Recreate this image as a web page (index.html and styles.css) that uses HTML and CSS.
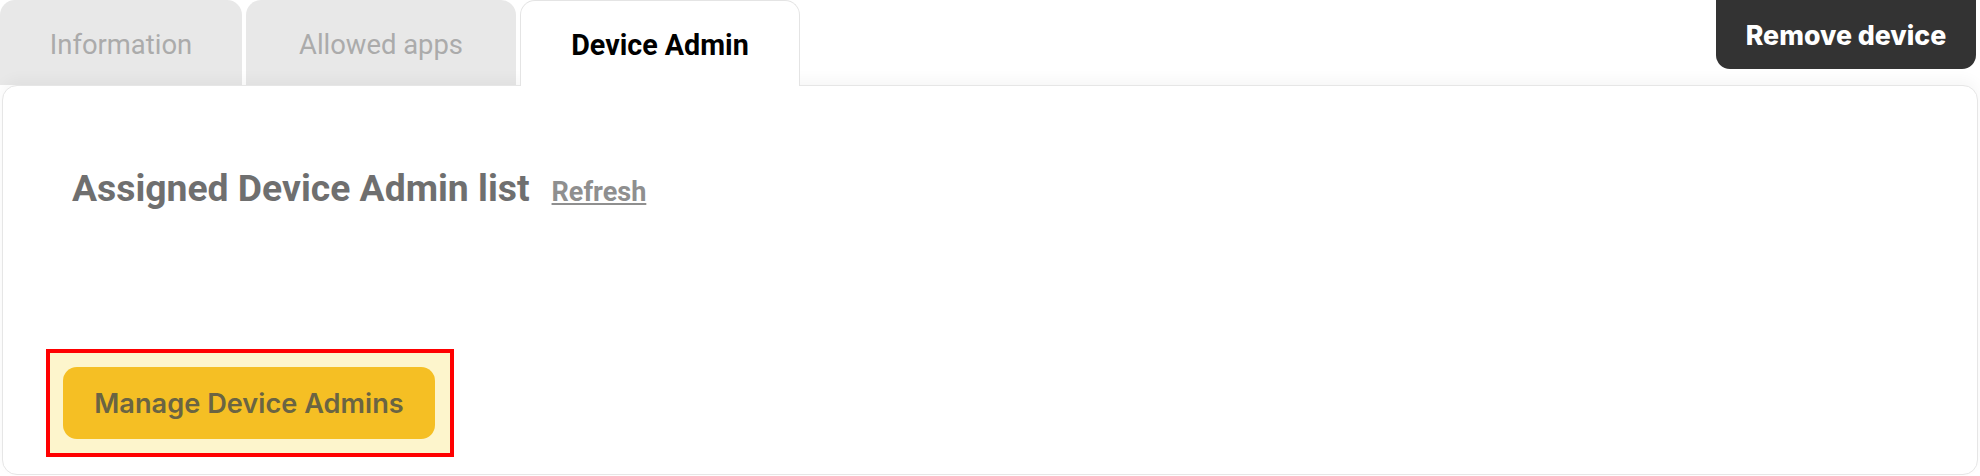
FILE: index.html
```html
<!DOCTYPE html>
<html>
<head>
  <title>Device Admin</title>
  <link rel="stylesheet" href="styles.css">
</head>
<body>
  <div class="page">
    <div class="top-bar">
      <div class="tabs">
        <div class="tab tab-info">Information</div>
        <div class="tab tab-apps">Allowed apps</div>
        <div class="tab tab-admin active">Device Admin</div>
      </div>
      <button class="remove-btn">Remove device</button>
    </div>

    <div class="panel">
      <div class="panel-head">
        <h2>Assigned Device Admin list</h2>
        <a class="refresh" href="#">Refresh</a>
      </div>

      <div class="highlight">
        <button class="manage-btn">Manage Device Admins</button>
      </div>
    </div>
  </div>
</body>
</html>
```

FILE: styles.css
```css
body {
  margin: 0;
  padding: 0;
  background-color: white;
  font-family: Roboto, "Liberation Sans", sans-serif;
}

.page {
  height: 476px;
  display: flex;
  flex-direction: column;
  overflow: hidden;
}

.top-bar {
  height: 85px;
  display: flex;
  justify-content: space-between;
  align-items: flex-start;
  padding-right: 4px;
}

.tabs {
  display: flex;
  align-items: flex-start;
  gap: 4px;
  height: 85px;
}

.tab {
  height: 85px;
  box-sizing: border-box;
  padding-top: 4px;
  display: flex;
  align-items: center;
  justify-content: center;
  background-color: #e8e8e8;
  color: #ababab;
  font-size: 27.4px;
  border-radius: 15px 15px 0 0;
}

.tab-info {
  width: 242px;
}

.tab-apps {
  width: 270px;
}

.tab-admin {
  width: 280px;
}

.tab.active {
  position: relative;
  z-index: 2;
  height: 86px;
  background-color: white;
  color: black;
  font-weight: 700;
  font-size: 28.7px;
  border: 1px solid #e4e4e4;
  border-bottom: none;
  padding-top: 3px;
}

.remove-btn {
  height: 69px;
  width: 260px;
  border: none;
  border-radius: 0 0 14px 14px;
  background-color: #333333;
  color: white;
  font-family: Inter, sans-serif;
  font-weight: 800;
  font-size: 26.7px;
  padding: 0;
}

.panel {
  flex: 1;
  margin: 0 2px 1px 2px;
  border: 1px solid #e6e6e6;
  border-radius: 15px;
  box-shadow: 0 -6px 14px rgba(0, 0, 0, 0.035);
  background-color: white;
  padding: 80px 0 17px 43px;
  display: flex;
  flex-direction: column;
  justify-content: space-between;
}

.panel-head {
  display: flex;
  align-items: baseline;
  gap: 22px;
  padding-left: 26px;
}

.panel-head h2 {
  margin: 0;
  font-size: 37.3px;
  font-weight: 700;
  color: #6f6f6f;
}

.refresh {
  font-size: 27px;
  font-weight: 700;
  color: #8f8f8f;
}

.highlight {
  align-self: flex-start;
  border: 4px solid #ff0000;
  background-color: #fdf5cc;
  padding: 14px 15px 14px 13px;
}

.manage-btn {
  width: 372px;
  height: 72px;
  border: none;
  border-radius: 14px;
  background-color: #f5bf24;
  color: #6a6443;
  font-family: Inter, sans-serif;
  font-weight: 600;
  font-size: 27.2px;
}
```
